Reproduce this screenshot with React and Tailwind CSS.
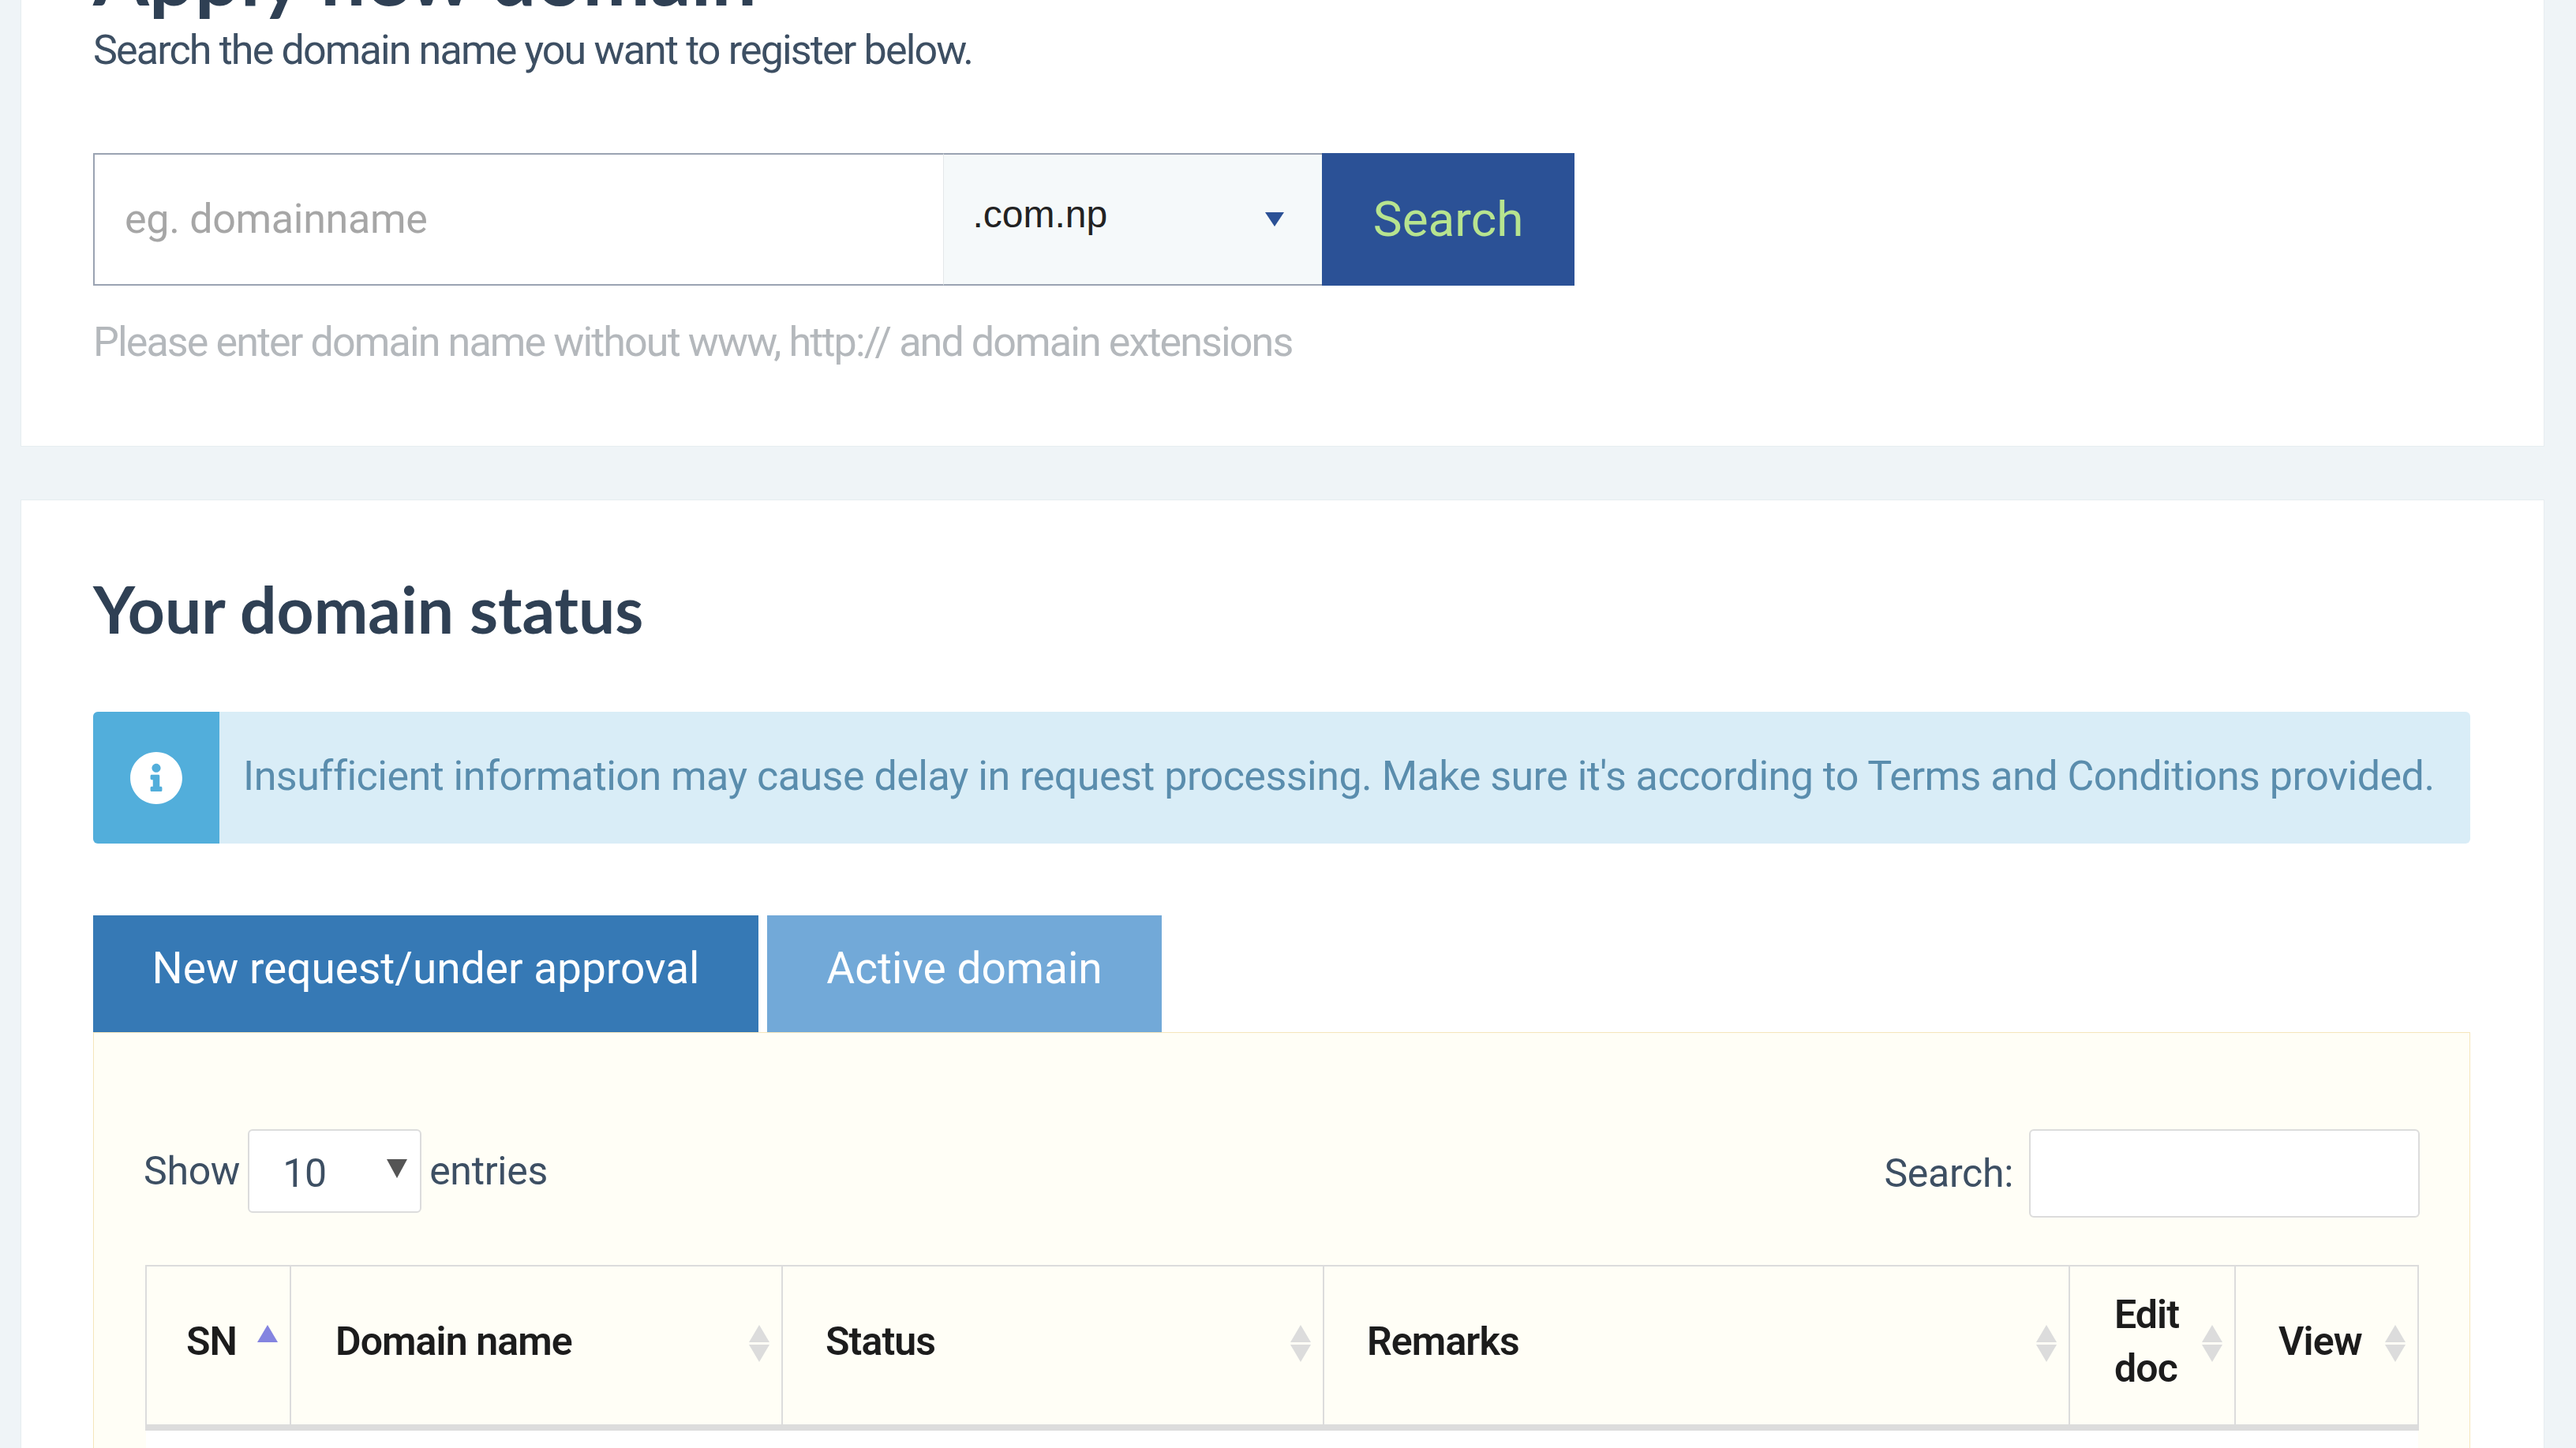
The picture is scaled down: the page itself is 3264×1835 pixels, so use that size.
import React from 'react';
import { FaInfoCircle } from 'react-icons/fa';

const columns = [
  { label: 'SN', width: 'w-[183px]', pad: 'pl-[50px]', active: true },
  { label: 'Domain name', width: 'w-[623px]', pad: 'pl-[56px]' },
  { label: 'Status', width: 'w-[686px]', pad: 'pl-[54px]' },
  { label: 'Remarks', width: 'w-[945px]', pad: 'pl-[54px]' },
  { label: 'Edit doc', width: 'w-[210px]', pad: 'pl-[56px] pr-[60px]' },
  { label: 'View', width: 'w-[232px]', pad: 'pl-[54px]' },
];

const SortArrows = ({ active }) => (
  <svg width="26" height="48" viewBox="0 0 26 48" className="absolute right-[15px] top-[74px]">
    <polygon points="13,0 26,22 0,22" fill={active ? '#8484e0' : '#dcdcdc'} />
    {!active && <polygon points="0,25 26,25 13,47" fill="#dcdcdc" />}
  </svg>
);

const App = () => {
  return (
    <div className="h-[1835px] overflow-hidden bg-[#eff4f7] font-['Roboto',sans-serif] text-[#3d4f63]">
      <div className="pl-[26px] pr-[40px]">
        <div className="-mt-[120px] h-[686px] border border-[#e6edf0] bg-white pl-[91px] pt-[32px]">
          <h1 className="font-['Lato',sans-serif] text-[102px] font-bold leading-[110px] text-[#2f4054]">Apply new domain</h1>
          <p className="mt-[8px] text-[52px] leading-[66px] tracking-[-1.85px]">Search the domain name you want to register below.</p>
          <div className="mt-[97px] flex h-[168px] w-[1877px]">
            <div className="flex w-[1078px] items-center border-2 border-r-0 border-[#9aa3b2] pl-[38px] text-[52px] tracking-[-0.3px] text-[#a6a6a6]">
              eg. domainname
            </div>
            <div className="flex w-[480px] items-center justify-between border-y-2 border-l border-[#9aa3b2] border-l-[#e4e8ea] bg-[#f5f9fa] pl-[36px] pr-[48px] font-['Liberation_Sans',sans-serif] text-[48px] text-[#222]">
              <span className="-mt-[12px]">.com.np</span>
              <svg width="24" height="18" viewBox="0 0 24 18"><polygon points="0,0 24,0 12,18" fill="#2b5196" /></svg>
            </div>
            <div className="flex w-[320px] items-center justify-center bg-[#2b5196] pb-[2px] text-[62px] text-[#b7e48f]">Search</div>
          </div>
          <p className="mt-[39px] text-[52px] leading-[66px] tracking-[-1.88px] text-[#b4b8bc]">Please enter domain name without www, http:// and domain extensions</p>
        </div>

        <div className="mt-[67px] h-[1300px] border border-[#e6edf0] bg-white pl-[91px] pr-[93px] pt-[92px]">
          <h2 className="font-['Lato',sans-serif] text-[82px] font-bold leading-[90px] text-[#2f4054]">Your domain status</h2>
          <div className="mt-[86px] flex h-[167px] overflow-hidden rounded-[6px] bg-[#d9edf7]">
            <div className="flex w-[160px] items-center justify-center bg-[#52aedb]">
              <FaInfoCircle className="text-[68px] text-white" />
            </div>
            <div className="flex items-center pb-[4px] pl-[30px] text-[52px] tracking-[-0.51px] text-[#5a8dad]">
              Insufficient information may cause delay in request processing. Make sure it's according to Terms and Conditions provided.
            </div>
          </div>
          <div className="mt-[91px] flex gap-[11px]">
            <div className="flex h-[148px] w-[843px] items-center justify-center bg-[#3679b5] pb-[14px] text-[55px] text-white">New request/under approval</div>
            <div className="flex h-[148px] w-[500px] items-center justify-center bg-[#72a9d8] pb-[14px] text-[55px] text-white">Active domain</div>
          </div>
          <div className="h-[600px] border border-[#f5e6bb] bg-[#fffef6] px-[63px] pt-[122px]">
            <div className="flex items-start justify-between">
              <div className="flex items-center gap-[10px] text-[50px] tracking-[-0.3px]">
                <span>Show</span>
                <div className="flex h-[106px] w-[220px] items-center justify-between rounded-[6px] border-2 border-[#dcdcdc] bg-white pl-[42px] pr-[16px]">
                  <span className="mt-[6px]">10</span>
                  <svg width="26" height="24" viewBox="0 0 26 24" className="-mt-[6px]"><polygon points="0,0 26,0 13,24" fill="#555" /></svg>
                </div>
                <span>entries</span>
              </div>
              <div className="flex items-center gap-[20px] text-[50px] tracking-[-0.3px]">
                <span>Search:</span>
                <div className="h-[112px] w-[495px] rounded-[6px] border-2 border-[#dcdcdc] bg-white" />
              </div>
            </div>
            <table className="ml-[2px] mt-[60px] w-[2879px] table-fixed border-collapse text-left text-[50px] leading-[68px] tracking-[-0.9px] text-[#1c1c1c]">
              <thead>
                <tr>
                  {columns.map((col) => (
                    <th key={col.label} className={`relative h-[205px] border-2 border-b-[8px] border-[#dcdcdc] pb-[10px] font-semibold ${col.width} ${col.pad}`}>
                      {col.label}
                      <SortArrows active={col.active} />
                    </th>
                  ))}
                </tr>
              </thead>
              <tbody>
                <tr><td colSpan={6} className="h-[60px] border-t-4 border-[#e6edf0] bg-white" /></tr>
              </tbody>
            </table>
          </div>
        </div>
      </div>
    </div>
  );
};

export default App;
